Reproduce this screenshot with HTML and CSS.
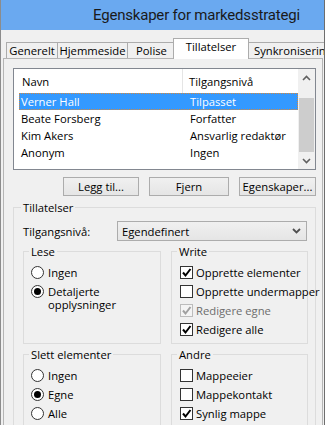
FILE: index.html
```html
<!DOCTYPE html>
<html lang="no">
<head>
  <meta charset="UTF-8">
  <title>Egenskaper for markedsstrategi</title>
  <link rel="stylesheet" href="styles.css">
</head>
<body>
<div class="window">

  <div class="titlebar">
    <span class="title">Egenskaper for markedsstrategi</span>
  </div>

  <div class="tabs">
    <div class="tab tab-general">Generelt</div>
    <div class="tab tab-home">Hjemmeside</div>
    <div class="tab tab-policy">Polise</div>
    <div class="tab tab-active">Tillatelser</div>
    <div class="tab tab-sync">Synkronisering</div>
  </div>

  <div class="panel">

    <div class="listbox">
      <div class="list">
        <div class="list-head">
          <span class="head-name">Navn</span>
          <span class="head-level">Tilgangsnivå</span>
        </div>
        <div class="row selected"><span class="cell-name">Verner Hall</span><span class="cell-level">Tilpasset</span></div>
        <div class="row"><span class="cell-name">Beate Forsberg</span><span class="cell-level">Forfatter</span></div>
        <div class="row"><span class="cell-name">Kim Akers</span><span class="cell-level">Ansvarlig redaktør</span></div>
        <div class="row"><span class="cell-name">Anonym</span><span class="cell-level">Ingen</span></div>
      </div>
      <div class="scrollbar">
        <div class="sb-btn">
          <svg width="9" height="6" viewBox="0 0 9 6"><polyline points="1,5 4.5,1.5 8,5" fill="none" stroke="#606060" stroke-width="1.6"/></svg>
        </div>
        <div class="sb-track"><div class="sb-thumb"></div></div>
        <div class="sb-btn">
          <svg width="9" height="6" viewBox="0 0 9 6"><polyline points="1,1 4.5,4.5 8,1" fill="none" stroke="#606060" stroke-width="1.6"/></svg>
        </div>
      </div>
    </div>

    <div class="buttons">
      <button class="btn btn-add">Legg til...</button>
      <button class="btn btn-remove">Fjern</button>
      <button class="btn btn-props">Egenskaper...</button>
    </div>

    <fieldset class="group group-main">
      <legend>Tillatelser</legend>

      <div class="level-row">
        <span class="level-label">Tilgangsnivå:</span>
        <div class="select">
          <span>Egendefinert</span>
          <svg width="9" height="6" viewBox="0 0 9 6"><polyline points="1,1 4.5,4.5 8,1" fill="none" stroke="#505050" stroke-width="1.8"/></svg>
        </div>
      </div>

      <div class="groups">
        <fieldset class="group">
          <legend>Lese</legend>
          <div class="opt"><span class="radio"></span><span>Ingen</span></div>
          <div class="opt"><span class="radio on"></span><span class="two-line">Detaljerte<br>opplysninger</span></div>
        </fieldset>

        <fieldset class="group">
          <legend>Write</legend>
          <div class="opt"><span class="check"><svg width="11" height="11" viewBox="0 0 11 11"><polyline points="2,5.5 4.5,8.5 9.5,2" fill="none" stroke="#000" stroke-width="2"/></svg></span><span>Opprette elementer</span></div>
          <div class="opt"><span class="check"></span><span>Opprette undermapper</span></div>
          <div class="opt disabled"><span class="check"><svg width="11" height="11" viewBox="0 0 11 11"><polyline points="2,5.5 4.5,8.5 9.5,2" fill="none" stroke="#a0a0a0" stroke-width="2"/></svg></span><span>Redigere egne</span></div>
          <div class="opt"><span class="check"><svg width="11" height="11" viewBox="0 0 11 11"><polyline points="2,5.5 4.5,8.5 9.5,2" fill="none" stroke="#000" stroke-width="2"/></svg></span><span>Redigere alle</span></div>
        </fieldset>

        <fieldset class="group">
          <legend>Slett elementer</legend>
          <div class="opt"><span class="radio"></span><span>Ingen</span></div>
          <div class="opt"><span class="radio on"></span><span>Egne</span></div>
          <div class="opt"><span class="radio"></span><span>Alle</span></div>
        </fieldset>

        <fieldset class="group">
          <legend>Andre</legend>
          <div class="opt"><span class="check"></span><span>Mappeeier</span></div>
          <div class="opt"><span class="check"></span><span>Mappekontakt</span></div>
          <div class="opt"><span class="check"><svg width="11" height="11" viewBox="0 0 11 11"><polyline points="2,5.5 4.5,8.5 9.5,2" fill="none" stroke="#000" stroke-width="2"/></svg></span><span>Synlig mappe</span></div>
        </fieldset>
      </div>
    </fieldset>

  </div>
</div>
</body>
</html>
```

FILE: styles.css
```css
* {
  margin: 0;
  padding: 0;
  box-sizing: border-box;
}

body {
  width: 325px;
  height: 425px;
  overflow: hidden;
  background: #f0f0f0;
  font: 11.25px "Open Sans", "Liberation Sans", sans-serif;
  color: #000;
}

.window {
  height: 425px;
  overflow: hidden;
  border-left: 1px solid #8c8c8c;
  border-right: 1px solid #6e6e6e;
}

/* title bar */
.titlebar {
  display: flex;
  align-items: center;
  height: 30px;
  padding-left: 92px;
  background: #6aa9f0;
}

.title {
  font: 15px Roboto, "Open Sans", sans-serif;
  letter-spacing: -0.2px;
  color: #1a1a1a;
  white-space: nowrap;
}

/* tabs */
.tabs {
  display: flex;
  align-items: flex-end;
  height: 28px;
  padding-left: 5px;
}

.tab {
  flex-shrink: 0;
  height: 16px;
  margin-right: -1px;
  border: 1px solid #acacac;
  border-bottom: 0;
  background: #f0f0f0;
  line-height: 15px;
  text-align: center;
  white-space: nowrap;
}

.tab-general { width: 52px; }
.tab-home { width: 71px; }
.tab-policy { width: 49px; }
.tab-sync { padding: 0 5px; }

.tab-active {
  position: relative;
  z-index: 1;
  width: 76px;
  height: 21px;
  margin: 0 -1px -1px -2px;
  background: #fff;
  line-height: 16px;
}

/* page */
.panel {
  height: 400px;
  margin: 0 1px 0 2px;
  padding: 9px 6px 0 9px;
  border: 1px solid #b5b5b5;
}

/* list of users */
.listbox {
  display: flex;
  height: 102px;
  border: 1px solid #828790;
  background: #fff;
}

.list {
  flex: 1;
}

.list-head {
  display: flex;
  height: 24px;
}

.head-name {
  display: flex;
  align-items: center;
  width: 169px;
  padding-left: 8px;
  border-right: 1px solid #e5e5e5;
}

.head-level {
  display: flex;
  align-items: center;
  padding-left: 6px;
}

.row {
  display: flex;
  align-items: center;
  height: 17px;
  margin-left: 5px;
  padding-left: 1px;
  border: 1px solid transparent;
  white-space: nowrap;
}

.row.selected {
  border: 1px dotted #d6883c;
  background: #3399ff;
  color: #fff;
}

.cell-name {
  width: 169px;
}

.scrollbar {
  display: flex;
  flex-direction: column;
  width: 17px;
  background: #f0f0f0;
}

.sb-btn {
  display: flex;
  align-items: center;
  justify-content: center;
  height: 17px;
}

.sb-track {
  flex: 1;
  padding: 12px 1px 0;
}

.sb-thumb {
  height: 54px;
  background: #cdcdcd;
}

/* buttons */
.buttons {
  display: flex;
  justify-content: flex-end;
  gap: 10px;
  margin-top: 7px;
}

.btn {
  height: 19px;
  border: 1px solid #acacac;
  background: linear-gradient(#f0f0f0, #e5e5e5);
  font: inherit;
  color: #000;
}

.btn-add { width: 76px; }
.btn-remove { width: 80px; }
.btn-props { width: 77px; }

/* group boxes */
.group {
  min-width: 0;
  border: 1px solid #dcdcdc;
}

.group > legend {
  margin-left: -2px;
  padding: 0 2px;
  line-height: 15px;
}

.group-main {
  height: 300px;
  margin-top: 4px;
  padding: 6px 7px 0 9px;
}

.level-row {
  display: flex;
  align-items: center;
  height: 20px;
}

.level-label {
  width: 94px;
}

.select {
  display: flex;
  align-items: center;
  justify-content: space-between;
  width: 190px;
  height: 20px;
  padding: 0 5px 0 4px;
  border: 1px solid #acacac;
  background: linear-gradient(#f0f0f0, #e5e5e5);
}

.groups {
  display: grid;
  grid-template-columns: 138px 137px;
  column-gap: 10px;
  row-gap: 3px;
  margin-top: 3px;
}

.groups .group {
  padding: 4px 6px 4px 8px;
}

.groups .group > legend {
  margin-left: -3px;
}

.opt {
  display: flex;
  align-items: flex-start;
  padding: 3px 0;
  line-height: 13px;
  white-space: nowrap;
}

.two-line {
  line-height: 13px;
}

.radio {
  display: flex;
  align-items: center;
  justify-content: center;
  flex-shrink: 0;
  width: 13px;
  height: 13px;
  margin: 0 4px 0 -1px;
  border: 1px solid #333;
  border-radius: 50%;
  background: #fff;
}

.radio.on::after {
  content: "";
  width: 7px;
  height: 7px;
  border-radius: 50%;
  background: #000;
}

.check {
  display: flex;
  align-items: center;
  justify-content: center;
  flex-shrink: 0;
  width: 13px;
  height: 13px;
  margin-right: 3px;
  border: 1px solid #333;
  background: #fff;
}

.opt.disabled {
  color: #6d6d6d;
}

.opt.disabled .check {
  border-color: #bcbcbc;
  background: #f4f4f4;
}
```
